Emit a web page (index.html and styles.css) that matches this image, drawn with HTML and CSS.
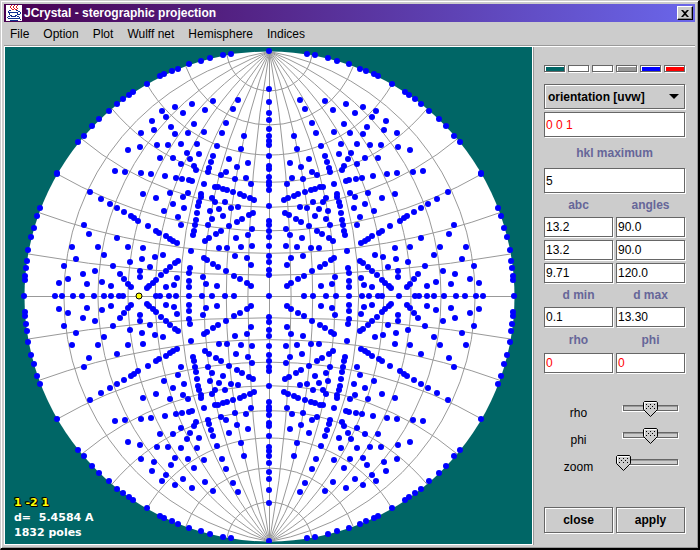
FILE: index.html
```
<!DOCTYPE html>
<html lang="en">
<head>
  <meta charset="UTF-8" />
  <meta name="viewport" content="width=device-width, initial-scale=1.0" />
  <title>JCrystal - sterographic projection</title>
  <link rel="stylesheet" href="styles.css">
</head>
<body>
  <div class="window">
    <header class="titlebar">
      <svg class="logo" viewBox="0 0 16 16" shape-rendering="crispEdges" aria-hidden="true">
        <rect width="16" height="16" fill="#fff"/>
        <path d="M5 0h1v1H5zM4 1h1v2H4zM5 3h1v1H5zM8 0h1v1H8zM7 1h1v2H7zM8 3h1v1H8zM6 4h2v1H6zM11 0h1v1h-1zM10 1h1v2h-1zM11 3h1v1h-1zM9 4h2v1H9z" fill="#e02020"/>
        <path d="M3 5h2v1H3zM10 5h2v1h-2zM2 6h1v2H2zM12 6h2v1h-2zM3 7h9v1H3zM14 7h1v2h-1zM3 8h1v2H3zM11 8h1v2h-1zM12 9h2v1h-2zM4 10h2v1H4zM9 10h2v1H9zM5 11h5v1H5zM2 11h2v1H2zM11 11h2v1h-2zM1 12h1v1H1zM13 12h1v1h-1zM2 13h12v1H2zM4 15h8v1H4zM14 14h1v1h-1z" fill="#103090"/>
      </svg>
      <h1>JCrystal - sterographic projection</h1>
      <button class="close-box" type="button" aria-label="Close window">
        <svg viewBox="0 0 8 7" width="8" height="7"><path d="M0 0h2l2 2 2-2h2L5 3.500 8 7H6L4 5 2 7H0l3-3.500z" fill="#000"/></svg>
      </button>
    </header>

    <nav class="menu">
      <a href="#">File</a>
      <a href="#">Option</a>
      <a href="#">Plot</a>
      <a href="#">Wulff net</a>
      <a href="#">Hemisphere</a>
      <a href="#">Indices</a>
    </nav>

    <main class="content">
      <section class="plot">
        <svg id="projection" viewBox="0 0 527 496">
          <circle id="disc" fill="#fff"/>
          <g id="net"></g>
          <g id="poles"></g>
        </svg>
        <div class="info">
          <p class="picked">1 -2 1</p>
          <p>d=&nbsp; 5.4584 A</p>
          <p>1832 poles</p>
        </div>
      </section>

      <form class="panel">
        <div class="swatches">
          <button type="button" class="teal" aria-label="Background"></button>
          <button type="button" class="white" aria-label="Sphere"></button>
          <button type="button" class="white" aria-label="Text"></button>
          <button type="button" class="gray" aria-label="Net"></button>
          <button type="button" class="blue" aria-label="Poles"></button>
          <button type="button" class="red" aria-label="Zone"></button>
        </div>

        <div class="fields">
          <select class="wide tall" aria-label="Orientation mode">
            <option>orientation [uvw]</option>
          </select>
          <input class="wide tall hot" type="text" value="0 0 1" aria-label="Orientation">
          <label class="wide roomy" for="hklMax">hkl maximum</label>
          <input class="wide tall" id="hklMax" type="text" value="5">

          <label for="a">abc</label>
          <label for="alpha">angles</label>
          <input id="a" type="text" value="13.2">
          <input id="alpha" type="text" value="90.0">
          <input type="text" value="13.2" aria-label="b">
          <input type="text" value="90.0" aria-label="beta">
          <input type="text" value="9.71" aria-label="c">
          <input type="text" value="120.0" aria-label="gamma">

          <label for="dMin">d min</label>
          <label for="dMax">d max</label>
          <input id="dMin" type="text" value="0.1">
          <input id="dMax" type="text" value="13.30">

          <label class="last" for="rho">rho</label>
          <label class="last" for="phi">phi</label>
          <input class="hot" id="rho" type="text" value="0">
          <input class="hot" id="phi" type="text" value="0">
        </div>

        <div class="sliders">
          <label for="rhoSlider">rho</label>
          <input id="rhoSlider" type="range" min="-90" max="90" value="0">
          <label for="phiSlider">phi</label>
          <input id="phiSlider" type="range" min="-180" max="180" value="0">
          <label for="zoomSlider">zoom</label>
          <input id="zoomSlider" type="range" min="0" max="100" value="0">
        </div>

        <div class="actions">
          <button type="button">close</button>
          <button type="button">apply</button>
        </div>
      </form>
    </main>
  </div>

  <script>
    (() => {
      const NS = 'http://www.w3.org/2000/svg';
      const CX = 264.5, CY = 249.5, R = 245;
      const rad = Math.PI / 180;
      const net = document.getElementById('net');
      const poles = document.getElementById('poles');

      function add(parent, tag, attrs) {
        const el = document.createElementNS(NS, tag);
        for (const k in attrs) el.setAttribute(k, attrs[k]);
        parent.appendChild(el);
      }

      const disc = document.getElementById('disc');
      disc.setAttribute('cx', CX);
      disc.setAttribute('cy', CY);
      disc.setAttribute('r', R);

      // Wulff net, 10 degree steps
      add(net, 'path', { d: `M${CX} ${CY - R}V${CY + R}M${CX - R} ${CY}H${CX + R}` });
      for (let t = 10; t < 90; t += 10) {
        const x0 = R * Math.tan(t * rad / 2);
        const rg = (R * R + x0 * x0) / (2 * x0);
        add(net, 'path', { d: `M${CX} ${CY - R}A${rg} ${rg} 0 0 1 ${CX} ${CY + R}` });
        add(net, 'path', { d: `M${CX} ${CY - R}A${rg} ${rg} 0 0 0 ${CX} ${CY + R}` });

        const rs = R * Math.tan(t * rad);
        const x = R * Math.sin(t * rad), y = R * Math.cos(t * rad);
        add(net, 'path', { d: `M${CX - x} ${CY - y}A${rs} ${rs} 0 0 0 ${CX + x} ${CY - y}` });
        add(net, 'path', { d: `M${CX - x} ${CY + y}A${rs} ${rs} 0 0 1 ${CX + x} ${CY + y}` });
      }

      // Hexagonal cell
      const a = 13.2, c = 9.71, max = 5;
      const as = 2 / (Math.sqrt(3) * a), cs = 1 / c;
      const ox = Math.floor(CX), oy = Math.floor(CY);
      const seen = new Set();

      function allowed(h, k, l) {
        const s = [Math.abs(h), Math.abs(k), Math.abs(h + k)].sort((p, q) => p - q);
        if (s[1] <= max) return true;
        // same d as 5 3 l and 5 5 1
        return s[0] === 0 && (s[1] === 7 || (s[1] === 8 && l === 3));
      }

      for (let h = -10; h <= 10; h++) {
        for (let k = -10; k <= 10; k++) {
          for (let l = 0; l <= max; l++) {
            if ((!h && !k && !l) || !allowed(h, k, l)) continue;
            const vx = as * k * Math.sqrt(3) / 2;
            const vy = as * (h + k / 2);
            const vz = cs * l;
            const len = Math.hypot(vx, vy, vz);
            const x = Math.round(ox + R * vx / (len + vz));
            const y = Math.round(oy + R * vy / (len + vz));
            const key = x + ',' + y;
            if (seen.has(key)) continue;
            seen.add(key);
            add(poles, 'circle', { cx: x, cy: y, r: 3 });
          }
        }
      }

      // picked pole 1 -2 1
      const p = as * Math.sqrt(3);
      const px = Math.round(ox - R * p / (Math.hypot(p, cs) + cs));
      add(poles, 'circle', { cx: px, cy: oy, r: 3, class: 'selected' });
    })();
  </script>
</body>
</html>
```
FILE: styles.css
```
* { box-sizing: border-box }
body { margin: 0; background: #ccc; color: #000; font: 12px "Liberation Sans", Arial, sans-serif }
input, select, button { font: inherit; color: inherit; margin: 0; border-radius: 0 }

.window { display: flex; flex-direction: column; min-height: 100vh; padding: 3px; border: 1px solid #ccc; border-right: 2px solid #000; border-bottom: 2px solid #000; background: #ccc; box-shadow: inset 1px 1px 0 #fff, inset -1px -1px 0 #999 }

/* Title bar */
.titlebar { display: flex; align-items: center; height: 18px; padding: 0 2px; background: linear-gradient(90deg, #480050, #6a66ea) }
.logo { width: 16px; height: 16px }
.titlebar h1 { flex: 1; margin: 0 0 0 2px; color: #fff; font-size: 12px; line-height: 18px }
.close-box { display: flex; align-items: center; justify-content: center; width: 16px; height: 14px; padding: 0; background: #ccc; border: 1px solid; border-color: #fff #000 #000 #fff; box-shadow: inset -1px -1px 0 #888 }

/* Menu */
.menu { display: flex; gap: 14px; height: 24px; padding: 0 6px; line-height: 25px; border-bottom: 1px solid #999 }
.menu a { color: #000; text-decoration: none }

.content { flex: 1; display: flex; border-left: 1px solid #fff; border-top: 1px solid #fff }

/* Projection */
.plot { position: relative; flex: 1; min-width: 0; background: #066; border-right: 1px solid #fff; border-bottom: 1px solid #fff }
.plot svg { display: block; width: 100% }
#net { fill: none; stroke: #999; stroke-width: 1 }
#poles { fill: #00f }
#poles .selected { fill: #ff0; stroke: #000 }
.info { position: absolute; left: 9px; bottom: 4px; color: #fff; font: bold 11px/15px "DejaVu Sans", Verdana, sans-serif }
.info p { margin: 0 }
.info .picked { color: #ff0; text-shadow: 1px 0 #000, -1px 0 #000, 0 1px #000, 0 -1px #000, 1px 1px #000, -1px -1px #000 }

/* Side panel */
.panel { display: flex; flex-direction: column; width: 162px; padding: 18px 10px 12px; border-left: 1px solid #999 }
.swatches { display: grid; grid-template-columns: repeat(6, 1fr); gap: 3px; margin-bottom: 12px }
.swatches button { height: 7px; padding: 0; border: 1px solid #666; box-shadow: 1px 1px 0 #fff, inset 1px 1px 0 #fff }
.teal { background: #066 }
.white { background: #fff }
.gray { background: #999 }
.blue { background: #00f }
.red { background: #f00 }

.fields { display: grid; grid-template-columns: 1fr 1fr; gap: 3px }
.fields .wide { grid-column: span 2 }
.fields input, .fields select { width: 100%; min-width: 0; height: 20px; padding: 0 1px; background: #fff; border: 1px solid #666; box-shadow: 1px 1px 0 #fff; outline: none }
.fields .tall { height: 25px }
.fields .hot { color: #f00 }
.fields select { appearance: none; padding: 0 3px; font-weight: bold; background: #ccc url("data:image/svg+xml,%3Csvg xmlns='http://www.w3.org/2000/svg' width='10' height='5'%3E%3Cpath d='M0 0h10L5 5z'/%3E%3C/svg%3E") no-repeat right 5px center; box-shadow: 1px 1px 0 #fff, inset 1px 1px 0 #fff }
.fields label { height: 18px; line-height: 18px; text-align: center; font-weight: bold; color: #669 }
.fields .roomy { height: 25px; line-height: 27px }
.fields .last { height: 20px; line-height: 20px }

.sliders { display: grid; grid-template-columns: 69px 1fr; gap: 0 3px; margin-top: 27px }
.sliders label { height: 27px; line-height: 27px; text-align: center }
.sliders input { appearance: none; width: 100%; height: 17px; background: none }
.sliders input::-webkit-slider-runnable-track {
  height: 16px;
  background:
    linear-gradient(#999 1px, #ccc 1px) no-repeat center 5px / calc(100% - 16px) 4px,
    linear-gradient(#666, #666) no-repeat center 4px / calc(100% - 14px) 6px,
    linear-gradient(#fff, #fff) no-repeat center 5px / calc(100% - 12px) 6px;
}
.sliders input::-webkit-slider-thumb { appearance: none; width: 15px; height: 16px; background: url("data:image/svg+xml,%3Csvg xmlns='http://www.w3.org/2000/svg' width='15' height='16'%3E%3Cpath d='M1.500.5h12l1 1v7l-7 7-7-7v-7z' fill='%23ccc' stroke='%23000'/%3E%3Cpath d='M1.500 8V1.500H13' fill='none' stroke='%23fff'/%3E%3Cpath d='M3 3h1v1H3zM7 3h1v1H7zM11 3h1v1h-1zM5 5h1v1H5zM9 5h1v1H9zM3 7h1v1H3zM7 7h1v1H7zM11 7h1v1h-1z'/%3E%3C/svg%3E") no-repeat }

.actions { display: grid; grid-template-columns: 1fr 1fr; gap: 3px; margin-top: auto }
.actions button { height: 26px; padding: 0; font-weight: bold; background: #ccc; border: 1px solid #666; box-shadow: 1px 1px 0 #fff, inset 1px 1px 0 #fff }
```
